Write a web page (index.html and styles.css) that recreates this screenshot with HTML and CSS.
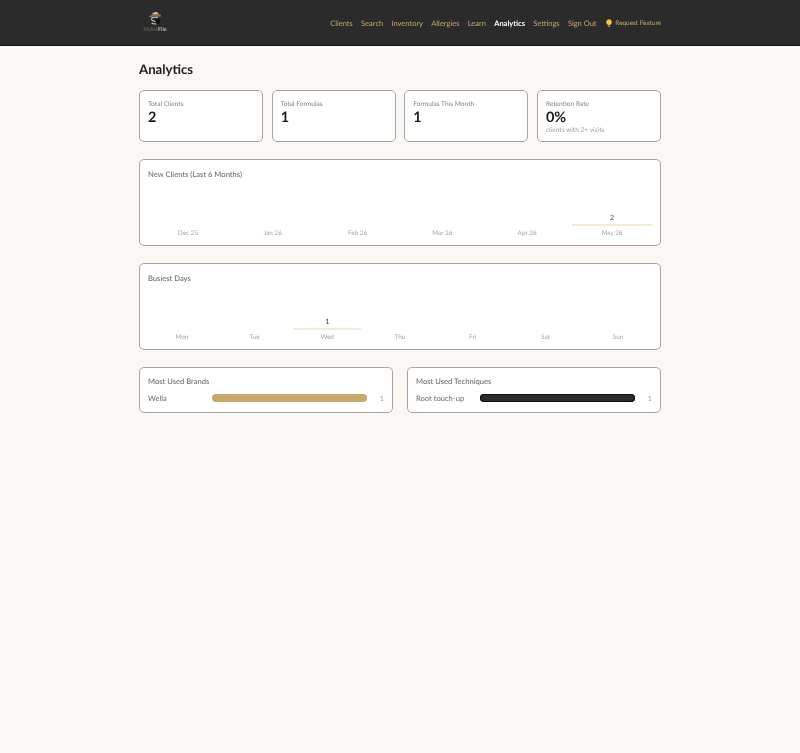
FILE: index.html
```html
<!DOCTYPE html>
<html lang="en">
<head>
<meta charset="UTF-8">
<title>Analytics</title>
<link rel="stylesheet" href="styles.css">
</head>
<body>
<header class="topbar">
	<div class="topbar-inner">
		<a class="logo">
			<svg width="30" height="19" viewBox="0 -2 30 25">
				<path d="M7 8 L15 2.5 L23 6 L22 8.5 L15 7 L9 9.5 Z" fill="#8f7156"/>
				<path d="M11 3.5 L17 1.5 L20 4 L14 5 Z" fill="#d9c6ac"/>
				<path d="M19 9 C14 8 9 9.5 11 12.5 C13 14.5 18 14 17.5 16.5 C17 18.5 13 18 10.5 16.5" fill="none" stroke="#c9c5c0" stroke-width="1.4"/>
				<path d="M15 12 L21 10.500 L21.500 16 C20 18 18 18.500 17 18 Z" fill="#111"/>
			</svg>
			<span class="logo-text">Stylist<b>File</b></span>
		</a>
		<nav class="nav">
			<a>Clients</a>
			<a>Search</a>
			<a>Inventory</a>
			<a>Allergies</a>
			<a>Learn</a>
			<a class="active">Analytics</a>
			<a>Settings</a>
			<a>Sign Out</a>
			<a class="request">
				<svg width="6" height="8" viewBox="0 0 12 16"><path d="M6 0.5 A5.5 5.5 0 0 1 9.2 10.5 L8.8 12 H3.2 L2.8 10.5 A5.5 5.5 0 0 1 6 0.5 Z" fill="#f5c542"/><path d="M3.5 13 H8.500 V15 L7 15.8 H5 L3.5 15 Z" fill="#9a9a94"/></svg>
				Request Feature
			</a>
		</nav>
	</div>
</header>

<main class="page">
	<h1>Analytics</h1>

	<div class="stats">
		<div class="card stat">
			<div class="stat-label">Total Clients</div>
			<div class="stat-value">2</div>
		</div>
		<div class="card stat">
			<div class="stat-label">Total Formulas</div>
			<div class="stat-value">1</div>
		</div>
		<div class="card stat">
			<div class="stat-label">Formulas This Month</div>
			<div class="stat-value">1</div>
		</div>
		<div class="card stat">
			<div class="stat-label">Retention Rate</div>
			<div class="stat-value">0%</div>
			<div class="stat-sub">clients with 2+ visits</div>
		</div>
	</div>

	<section class="card chart-card">
		<div class="card-title">New Clients (Last 6 Months)</div>
		<div class="chart">
			<div class="col"><span class="col-label">Dec 25</span></div>
			<div class="col"><span class="col-label">Jan 26</span></div>
			<div class="col"><span class="col-label">Feb 26</span></div>
			<div class="col"><span class="col-label">Mar 26</span></div>
			<div class="col"><span class="col-label">Apr 26</span></div>
			<div class="col"><span class="col-value">2</span><span class="col-bar"></span><span class="col-label">May 26</span></div>
		</div>
	</section>

	<section class="card chart-card">
		<div class="card-title">Busiest Days</div>
		<div class="chart">
			<div class="col"><span class="col-label">Mon</span></div>
			<div class="col"><span class="col-label">Tue</span></div>
			<div class="col"><span class="col-value">1</span><span class="col-bar"></span><span class="col-label">Wed</span></div>
			<div class="col"><span class="col-label">Thu</span></div>
			<div class="col"><span class="col-label">Fri</span></div>
			<div class="col"><span class="col-label">Sat</span></div>
			<div class="col"><span class="col-label">Sun</span></div>
		</div>
	</section>

	<div class="lists">
		<section class="card list-card">
			<div class="card-title">Most Used Brands</div>
			<div class="list-row">
				<span class="list-name">Wella</span>
				<span class="list-track"><span class="list-fill gold"></span></span>
				<span class="list-count">1</span>
			</div>
		</section>
		<section class="card list-card">
			<div class="card-title">Most Used Techniques</div>
			<div class="list-row">
				<span class="list-name">Root touch-up</span>
				<span class="list-track"><span class="list-fill dark"></span></span>
				<span class="list-count">1</span>
			</div>
		</section>
	</div>
</main>
</body>
</html>
```

FILE: styles.css
```css
html, body {margin:0; padding:0; min-height:100%;}
body {background:#faf7f4; color:#1a1a1a; font-family:"Lato", "Open Sans", sans-serif; text-rendering:geometricPrecision;}

.topbar {background:#2b2b2b; height:45px; border-bottom:1px solid #141414;}
.topbar-inner {width:522px; height:45px; margin:0 auto; display:flex; align-items:center; justify-content:space-between; filter:blur(0.3px);}
.logo {display:flex; flex-direction:column; align-items:center; width:30px; margin:0 0 4px 1px;}
.logo-text {font-size:5.5px; line-height:4px; color:#6e6a65;}
.logo-text b {color:#b5aea3;}
.nav {display:flex; align-items:center; gap:8.3px; font-size:7.5px; padding-top:1px;}
.nav a {color:#c9a86c; white-space:nowrap;}
.nav a.active {color:#fff; font-weight:700;}
.nav a.request {display:flex; align-items:center; gap:3.5px; font-size:6.4px; margin-left:1px;}

.page {width:522px; margin:0 auto; filter:blur(0.3px);}
h1 {margin:0; padding:14px 0 12px; font-size:13.2px; line-height:18px; font-weight:700; color:#1a1a1a;}

.card {background:#fff; border:1px solid #a8a49e; border-radius:5px; box-sizing:border-box;}
.card-title {font-size:7.6px; line-height:11px; font-weight:500; color:#6b6b6b;}

.stats {display:grid; grid-template-columns:repeat(4, 1fr); gap:8.5px; margin-bottom:17px;}
.stat {height:52px; padding:8px;}
.stat-label {font-size:6.6px; line-height:10px; color:#85817b;}
.stat-value {font-size:14.4px; line-height:14px; margin-top:2px; font-weight:700; color:#1a1a1a;}
.stat-sub {font-size:6.6px; line-height:10px; color:#a3a09a;}

.chart-card {height:87px; padding:9px 8px 6.5px; margin-bottom:17px; display:flex; flex-direction:column;}
.chart {flex:1; display:flex; gap:4.8px;}
.col {flex:1; display:flex; flex-direction:column; justify-content:flex-end; align-items:center;}
.col-value {font-size:7.2px; line-height:10px; color:#444;}
.col-bar {width:100%; height:2px; background:#f3ead8; margin-top:1px;}
.col-label {font-size:6.4px; line-height:10px; margin-top:2.5px; color:#a8a59f;}

.lists {display:grid; grid-template-columns:1fr 1fr; gap:14px;}
.list-card {height:46px; padding:8px;}
.list-row {display:flex; align-items:center; margin-top:5px;}
.list-name {width:64px; font-size:7.6px; line-height:12px; color:#6b6b6b;}
.list-track {flex:1; height:8px;}
.list-fill {display:block; width:100%; height:100%; border-radius:4px;}
.gold {background:#c9a86c;}
.dark {background:#2b2b2b; box-shadow:inset 0 0 0 1px #111;}
.list-count {width:17px; text-align:right; font-size:7.2px; color:#a3a09a;}
```
